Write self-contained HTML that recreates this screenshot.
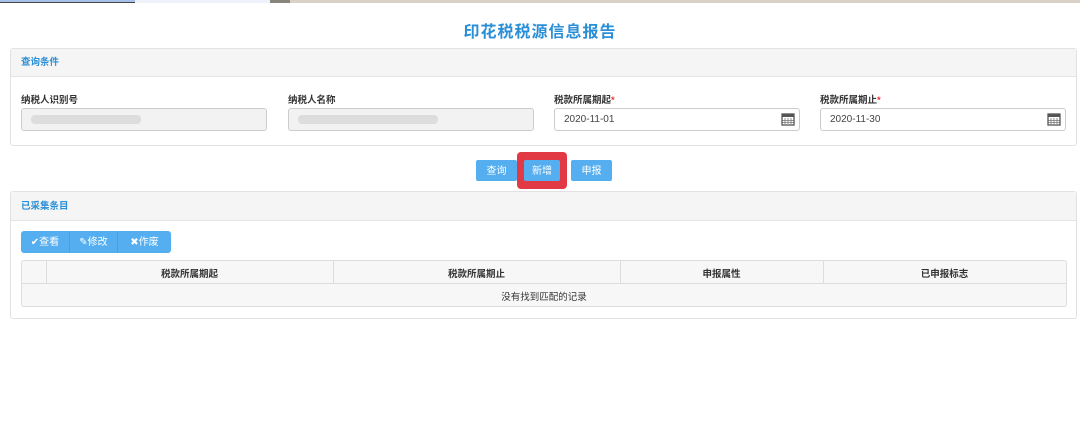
<!DOCTYPE html>
<html><head><meta charset="utf-8"><style>
*{box-sizing:border-box;margin:0;padding:0}
body{width:1080px;height:426px;background:#fff;font-family:"Liberation Sans","Noto Sans CJK SC",sans-serif;font-size:10px;color:#333;position:relative;overflow:hidden}
.a{position:absolute}
.title{left:0;width:1080px;top:18px;text-align:center;font-size:16px;font-weight:bold;color:#2a8fd6;letter-spacing:1px}
.panel{border:1px solid #e2e2e2;border-radius:3px;background:#fff}
.ph{background:#f5f5f5;border-bottom:1px solid #e4e4e4;color:#2a8fd6;font-weight:bold;font-size:9.5px;padding-left:10px}
.lbl{font-size:9.5px;font-weight:bold;color:#333}
.inp{border:1px solid #ccc;border-radius:3px;height:23px;background:#fff;font-size:10px;padding-left:9px;line-height:21px;color:#444}
.dis{background:#f2f2f2}
.btn{background:#55aef0;color:#fff;font-size:10px;text-align:center;border-radius:2px}
.star{color:#e33}
</style></head><body>
<div class="a" style="left:0;top:0;width:1080px;height:3px;background:#d8d2c6"></div>
<div class="a" style="left:0;top:0;width:135px;height:3px;background:#a8c0ec;border-bottom:1px solid #444"></div>
<div class="a" style="left:135px;top:0;width:135px;height:3px;background:#eef2fa"></div>
<div class="a" style="left:270px;top:0;width:20px;height:3px;background:#8a857c"></div>

<div class="a title">印花税税源信息报告</div>

<div class="a panel" style="left:10px;top:48px;width:1067px;height:98px">
 <div class="ph" style="height:28px;line-height:28px">查询条件</div>
</div>
<div class="a lbl" style="left:21px;top:92px">纳税人识别号</div>
<div class="a lbl" style="left:288px;top:92px">纳税人名称</div>
<div class="a lbl" style="left:554px;top:92px">税款所属期起<span class="star">*</span></div>
<div class="a lbl" style="left:820px;top:92px">税款所属期止<span class="star">*</span></div>
<div class="a inp dis" style="left:21px;top:108px;width:246px"><div style="margin-top:6px;width:110px;height:9px;background:#ddd;border-radius:4px"></div></div>
<div class="a inp dis" style="left:288px;top:108px;width:246px"><div style="margin-top:6px;width:140px;height:9px;background:#ddd;border-radius:4px"></div></div>
<div class="a inp" style="left:554px;top:108px;width:246px;line-height:22px">2020-11-01</div>
<div class="a inp" style="left:820px;top:108px;width:246px;line-height:22px">2020-11-30</div>
<svg class="a" style="left:781px;top:112px" width="14" height="14" viewBox="0 0 14 14"><rect x="1" y="2" width="12" height="11" fill="none" stroke="#555" stroke-width="1.3"/><rect x="1" y="2" width="12" height="3" fill="#555"/><path d="M4 6v6M7 6v6M10 6v6M1.5 8.5h11M1.5 10.5h11" stroke="#777" stroke-width="0.8"/></svg>
<svg class="a" style="left:1047px;top:112px" width="14" height="14" viewBox="0 0 14 14"><rect x="1" y="2" width="12" height="11" fill="none" stroke="#555" stroke-width="1.3"/><rect x="1" y="2" width="12" height="3" fill="#555"/><path d="M4 6v6M7 6v6M10 6v6M1.5 8.5h11M1.5 10.5h11" stroke="#777" stroke-width="0.8"/></svg>

<div class="a btn" style="left:476px;top:160px;width:41px;height:21px;line-height:23px">查询</div>
<div class="a" style="left:517px;top:152px;width:50px;height:37px;background:#e23a45;border-radius:4px"></div>
<div class="a btn" style="left:524px;top:160px;width:36px;height:21px;line-height:23px">新增</div>
<div class="a btn" style="left:571px;top:160px;width:41px;height:21px;line-height:23px">申报</div>

<div class="a panel" style="left:10px;top:191px;width:1067px;height:128px">
 <div class="ph" style="height:29px;line-height:29px">已采集条目</div>
</div>
<div class="a btn" style="left:21px;top:231px;width:150px;height:22px;line-height:23px;display:flex;border-radius:3px">
 <div style="width:49px;border-right:1px solid #4a9fe0">✔查看</div><div style="width:48px;border-right:1px solid #4a9fe0">✎修改</div><div style="flex:1">✖作废</div>
</div>
<div class="a" style="left:21px;top:260px;width:1046px;height:47px;border:1px solid #ddd;border-radius:3px;background:#f7f7f7"></div>
<div class="a" style="left:21px;top:283px;width:1046px;height:1px;background:#ddd"></div>
<div class="a" style="left:46px;top:261px;width:1px;height:22px;background:#ddd"></div>
<div class="a" style="left:333px;top:261px;width:1px;height:22px;background:#ddd"></div>
<div class="a" style="left:620px;top:261px;width:1px;height:22px;background:#ddd"></div>
<div class="a" style="left:823px;top:261px;width:1px;height:22px;background:#ddd"></div>
<div class="a lbl" style="left:46px;width:287px;top:266px;text-align:center">税款所属期起</div>
<div class="a lbl" style="left:333px;width:287px;top:266px;text-align:center">税款所属期止</div>
<div class="a lbl" style="left:620px;width:203px;top:266px;text-align:center">申报属性</div>
<div class="a lbl" style="left:823px;width:243px;top:266px;text-align:center">已申报标志</div>
<div class="a" style="left:21px;width:1046px;top:289px;text-align:center;font-size:9.5px">没有找到匹配的记录</div>
</body></html>
